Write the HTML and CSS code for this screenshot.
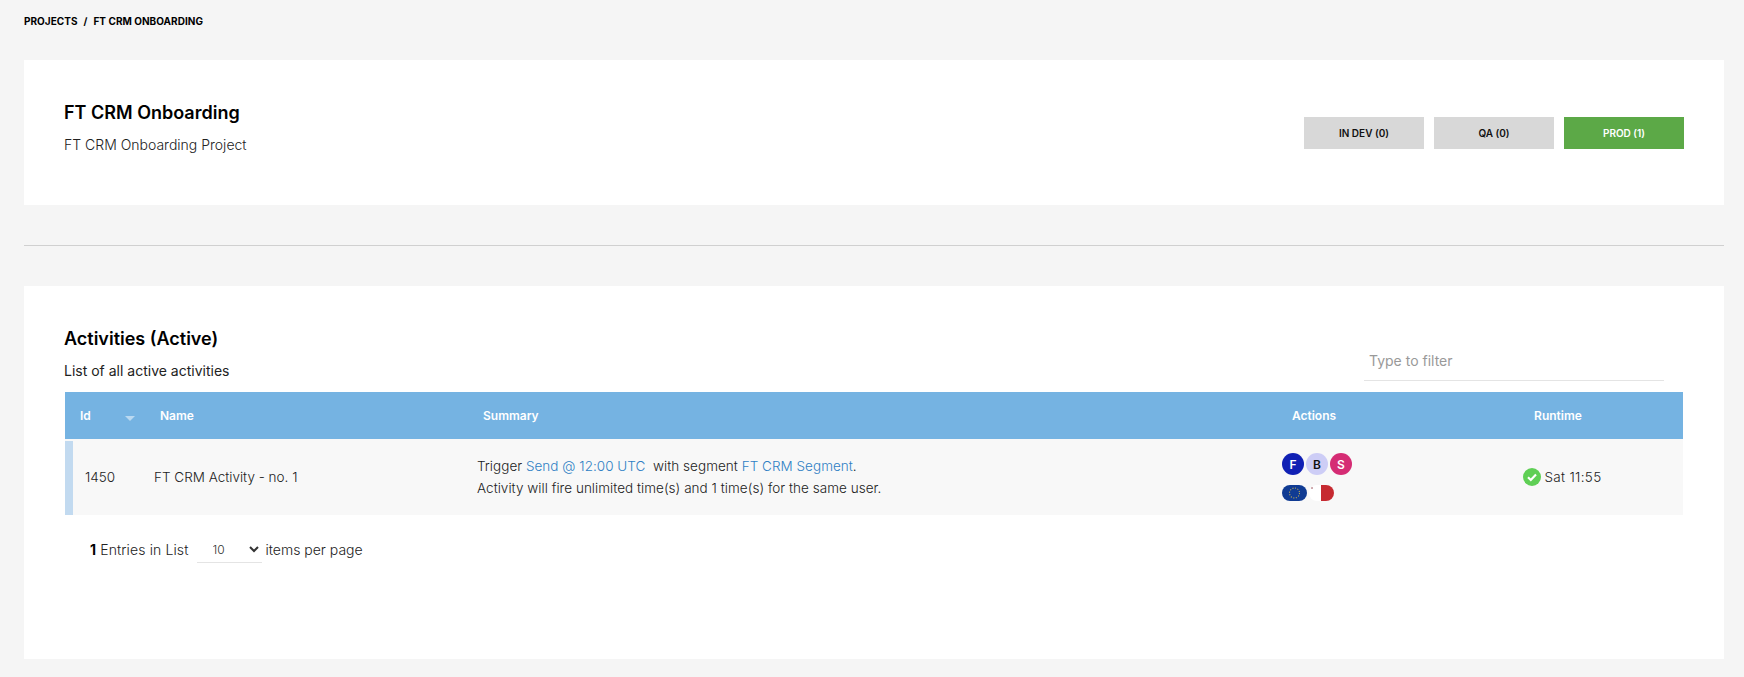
FILE: index.html
```html
<!DOCTYPE html>
<html lang="en">
<head>
<meta charset="utf-8">
<title>FT CRM Onboarding</title>
<link rel="stylesheet" href="styles.css">
</head>
<body>
<nav class="crumbs"><span>PROJECTS</span><span class="sep">/</span><span>FT CRM ONBOARDING</span></nav>
<section class="card head-card">
  <div>
    <h1 class="title">FT CRM Onboarding</h1>
    <p class="sub">FT CRM Onboarding Project</p>
  </div>
  <div class="envs">
    <button class="env">IN DEV (0)</button>
    <button class="env">QA (0)</button>
    <button class="env env-on">PROD (1)</button>
  </div>
</section>
<hr class="rule">
<section class="card list-card">
  <div class="list-head">
    <div class="list-text">
      <h2 class="title">Activities (Active)</h2>
      <p class="sub sub-list">List of all active activities</p>
    </div>
    <input class="filter" type="text" placeholder="Type to filter">
  </div>
  <div class="table">
    <div class="thead">
      <div class="th th-id">Id<svg class="sort" width="10" height="5" viewBox="0 0 10 5"><path d="M0 0H10L5 5Z" fill="#fff" fill-opacity=".5"/></svg></div>
      <div class="th">Name</div>
      <div class="th">Summary</div>
      <div class="th th-c th-act">Actions</div>
      <div class="th th-c">Runtime</div>
    </div>
    <div class="row">
      <div class="bar"></div>
      <div class="td td-id">1450</div>
      <div class="td td-name">FT CRM Activity - no. 1</div>
      <div class="td td-sum">
        <div>Trigger <a href="#">Send @ 12:00 UTC</a>&nbsp; with segment <a href="#">FT CRM Segment</a>.</div>
        <div>Activity will fire unlimited time(s) and 1 time(s) for the same user.</div>
      </div>
      <div class="td td-act">
        <div class="badges">
          <span class="badge b-f">F</span><span class="badge b-b">B</span><span class="badge b-s">S</span>
        </div>
        <div class="flags">
          <svg class="flag" width="25" height="16" viewBox="0 0 25 16">
            <rect width="25" height="16" fill="#103b93"/>
            <circle cx="12.5" cy="8" r="5" fill="none" stroke="#b9a95a" stroke-width="1.1" stroke-dasharray="1.1 1.5"/>
          </svg>
          <svg class="flag" width="25" height="16" viewBox="0 0 25 16">
            <rect width="12.5" height="16" fill="#fff"/>
            <rect x="12" width="13" height="16" fill="#c62a31"/>
            <path d="M2 3H4M3 2V4" stroke="#c08f96" stroke-width="1"/>
          </svg>
        </div>
      </div>
      <div class="td td-run">
        <svg width="18" height="18" viewBox="0 0 18 18"><circle cx="9" cy="9" r="9" fill="#5fcf55"/><path d="M5 9.3L7.8 12L13 6.6" fill="none" stroke="#fff" stroke-width="2.2"/></svg>
        <span class="run-time">Sat 11:55</span>
      </div>
    </div>
  </div>
  <div class="pager">
    <span class="count"><b>1</b> Entries in List</span>
    <select class="per"><option>10</option><option>25</option></select>
    <span>items per page</span>
  </div>
</section>
</body>
</html>
```
FILE: styles.css
```css
* { box-sizing: border-box; }
html, body { margin: 0; }
body {
  background: #f5f5f5;
  color: #222;
  font-family: Inter, "Liberation Sans", sans-serif;
  font-size: 14px;
  padding: 15px 20px 18px 24px;
}
.crumbs {
  display: flex;
  height: 13px;
  line-height: 13px;
  font-size: 10px;
  font-weight: 700;
  letter-spacing: .03px;
  color: #000;
  margin-bottom: 32px;
}
.sep { margin: 0 6px; }
.card { background: #fff; }
.head-card {
  height: 145px;
  padding: 42px 40px 0;
  display: flex;
  justify-content: space-between;
}
.title {
  margin: 0;
  font-size: 18px;
  line-height: 22px;
  font-weight: 600;
  color: #000;
}
.sub {
  margin: 11px 0 0;
  font-size: 14px;
  line-height: 20px;
  font-weight: 300;
  color: #222;
}
.sub-list { margin-top: 11px; font-weight: 400; }
.envs { display: flex; gap: 10px; margin-top: 15px; height: 32px; }
.env {
  width: 120px;
  height: 32px;
  border: 0;
  background: #d8d8d8;
  color: #111;
  font: 600 10px Inter, sans-serif;
}
.env-on { background: #5ca947; color: #fff; }
.rule {
  height: 1px;
  margin: 40px 0;
  border: 0;
  background: #d0d0d0;
}
.list-card {
  height: 373px;
  padding: 41px 40px 0;
}
.list-head { display: flex; justify-content: space-between; height: 65px; }
.list-text { padding-top: 1px; }
.filter {
  align-self: flex-start;
  width: 300px;
  height: 42px;
  margin: 12px 20px 0 0;
  padding: 2px 5px 0;
  border: 0;
  border-bottom: 1px solid #e4e4e4;
  outline: 0;
  font: 400 14px Inter, sans-serif;
}
.filter::placeholder { color: #999; opacity: 1; }
.table { margin: 0 1px; }
.thead, .row {
  display: grid;
  grid-template-columns: 80px 323px 725px 240px 250px;
}
.thead { height: 47px; background: #75b3e2; align-items: center; }
.th {
  padding-left: 15px;
  color: #fff;
  font-size: 12px;
  font-weight: 600;
}
.th-id { display: flex; align-items: center; justify-content: space-between; padding-right: 10px; }
.sort { margin-top: 5px; }
.th-c { padding-left: 0; text-align: center; }
.th-act { padding-left: 2px; }
.row {
  height: 76px;
  background: #f8f8f8;
  grid-template-columns: 8px 72px 323px 725px 240px 250px;
  align-items: center;
}
.bar { align-self: stretch; margin-top: 2px; background: #c2daf0; }
.td { font-size: 13.5px; font-weight: 300; color: #222; }
.td-id { padding-left: 12px; }
.td-name { padding-left: 9px; }
.td-sum { padding-left: 9px; line-height: 22px; letter-spacing: .03px; }
.td-sum a { color: #2f7fc4; text-decoration: none; }
.td-act { padding-left: 89px; }
.badges { display: flex; gap: 2px; }
.badge {
  width: 22px;
  height: 22px;
  border-radius: 50%;
  display: flex;
  align-items: center;
  justify-content: center;
  font-size: 12px;
  font-weight: 600;
  color: #fff;
}
.b-f { background: #1020b4; }
.b-b { background: #cdcdf6; color: #111; }
.b-s { background: #d52c74; }
.flags { display: flex; gap: 2px; margin-top: 10px; }
.flag { display: block; border-radius: 8px; }
.td-run { display: flex; align-items: center; justify-content: center; gap: 4px; padding-left: 8px; }
.run-time { letter-spacing: .3px; }
.pager {
  display: flex;
  align-items: center;
  margin: 21px 0 0 26px;
  font-size: 14px;
  font-weight: 300;
}
.count { letter-spacing: .12px; }
.pager b { font-weight: 700; color: #000; }
.per {
  width: 65px;
  height: 27px;
  margin: 0 4px 0 8px;
  padding-left: 12px;
  border: 0;
  border-bottom: 1px solid #e4e4e4;
  background: #fff;
  color: #333;
  font: 300 12px Inter, sans-serif;
  outline: 0;
}
```
